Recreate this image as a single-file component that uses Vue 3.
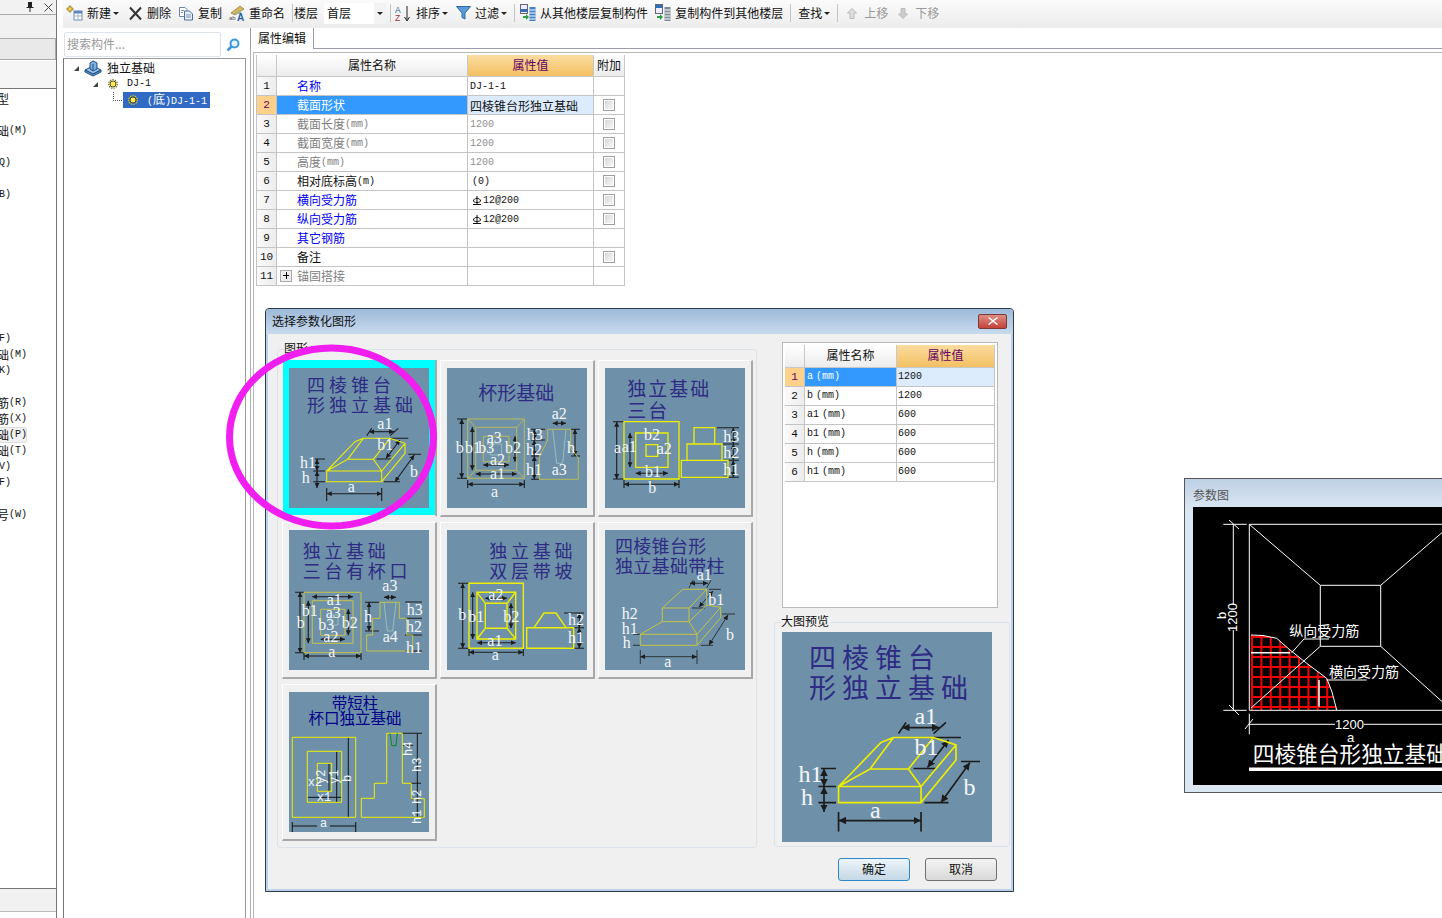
<script setup>
import { h } from 'vue'

const dockRows = [
  { i: 0, t: '型' }, { i: 2, t: '础', l: '(M)' }, { i: 4, l: 'Q)' }, { i: 6, l: 'B)' },
  { i: 15, l: 'F)' }, { i: 16, t: '础', l: '(M)' }, { i: 17, l: 'K)' }, { i: 19, t: '筋', l: '(R)' },
  { i: 20, t: '筋', l: '(X)' }, { i: 21, t: '础', l: '(P)', on: true }, { i: 22, t: '础', l: '(T)' },
  { i: 23, l: 'V)' }, { i: 24, l: 'F)' }, { i: 26, t: '号', l: '(W)' }
]
const dockList = Array.from({ length: 27 }, (_, i) => dockRows.find(r => r.i === i) || { i })

const attrs = [
  { name: '名称', cls: 'link', value: 'DJ-1-1' },
  { name: '截面形状', sel: true, cjk: true, value: '四棱锥台形独立基础', check: true },
  { name: '截面长度', unit: '(mm)', cls: 'muted', value: '1200', dim: true, check: true },
  { name: '截面宽度', unit: '(mm)', cls: 'muted', value: '1200', dim: true, check: true },
  { name: '高度', unit: '(mm)', cls: 'muted', value: '1200', dim: true, check: true },
  { name: '相对底标高', unit: '(m)', value: '(0)', pad: true, check: true },
  { name: '横向受力筋', cls: 'link', value: '12@200', rebar: true, check: true },
  { name: '纵向受力筋', cls: 'link', value: '12@200', rebar: true, check: true },
  { name: '其它钢筋', cls: 'link', value: '' },
  { name: '备注', value: '', check: true },
  { name: '锚固搭接', cls: 'muted', value: '', plus: true }
]

const params = [
  { name: 'a', value: '1200', sel: true },
  { name: 'b', value: '1200' },
  { name: 'a1', value: '600' },
  { name: 'b1', value: '600' },
  { name: 'h', value: '600' },
  { name: 'h1', value: '600' }
]

const serif = '"Liberation Serif",serif'
const mono = '"Liberation Mono",monospace'
const cjk = '"Noto Sans CJK SC",sans-serif'

const first = {
  titles: [
    { x: 18, y: 24, t: '四棱锥台', s: 18, ls: 4 },
    { x: 18, y: 44, t: '形独立基础', s: 18, ls: 4 }
  ],
  stroke: '#eeee00',
  w: 1.1,
  shape: 'M37.7 103H92.7V113.7H37.7Z M37.7 103L66 73.7L74.3 70.3H101L116 75.3V85.3L92.7 113.7 M92.7 103L116 75.3 M37.7 103L58.7 91.3H84.3L92.7 103 M58.7 91.3L74.3 70.3 M84.3 91.3L101 70.3',
  ticks: 'M37.7 120V133 M92.7 120V133 M77.7 67.7L82.7 60.3 M101 67.7L109.3 60.3 M101 70.3H119.3 M87.7 91H102.7 M119.3 86.3H132 M95 113.7H111 M26 91H36 M24.3 103H36 M24.3 113.7H36',
  dims: [[37.7, 125.7, 92.7, 125.7], [80, 63.7, 105, 63.7], [111, 72, 97, 90.3], [125.3, 87, 106, 113.7], [28, 91, 28, 103], [28, 103, 28, 120]],
  labels: [[88.3, 61, 'a1'], [88.3, 82, 'b1'], [121, 108.7, 'b'], [11, 100.3, 'h1'], [12.7, 115.3, 'h'], [58.7, 123.7, 'a']]
}

const drawings = [
  { id: 1, selected: true, ...first },
  {
    id: 2,
    titles: [{ x: 31.3, y: 32, t: '杯形基础', s: 19, ls: 0 }],
    stroke: '#b9b955',
    w: 1,
    shape: 'M20.7 51H77.3V110.3H20.7Z M28.7 59.3H69.7V102.3H28.7Z M36.3 68.3H62V93.7H36.3Z M20.7 51L28.7 59.3 M77.3 51L69.7 59.3 M20.7 110.3L28.7 102.3 M77.3 110.3L69.7 102.3 M100.7 61.3H123.7V80L131.3 90V111.3H92.3V88.7L100.7 72Z',
    inner: 'M43 76H54.7V87H43Z M105.7 61.3L109.7 95.3H115.7L119 61.3',
    ticks: 'M10 51H20 M10 110.3H20 M20.7 112V120 M77.3 112V120 M84 61.3H98 M84 72H98 M84 88H92 M84 111.3H92 M124 61.3H133 M124 88H133',
    dims: [[14.7, 51, 14.7, 110.3], [25.3, 59.3, 25.3, 102.3], [68, 68.3, 68, 93.7], [20.7, 116.3, 77.3, 116.3], [28.7, 106, 69.7, 106], [36.3, 97, 62, 97], [87.3, 61.3, 87.3, 72], [87.3, 72, 87.3, 88], [87.3, 88, 87.3, 111.3], [128, 61.3, 128, 88], [105.7, 55.3, 119, 55.3]],
    labels: [[8.7, 85, 'b'], [18, 85, 'b1'], [31.3, 85, 'b3'], [39.7, 74.7, 'a3'], [58, 85, 'b2'], [43, 97, 'a2'], [43, 111.3, 'a1'], [44, 128.7, 'a'], [79.7, 72, 'h3'], [79, 87, 'h2'], [79, 107, 'h1'], [104.7, 51.3, 'a2'], [120, 85.3, 'h'], [104.7, 107, 'a3']]
  },
  {
    id: 3,
    titles: [
      { x: 22.3, y: 28, t: '独立基础', s: 19, ls: 2 },
      { x: 22.3, y: 50, t: '三台', s: 19, ls: 2 }
    ],
    stroke: '#eeee00',
    w: 1.3,
    shape: 'M19 53.7H74V111H19Z M30.7 65H63V99.3H30.7Z M41 76.7H52.7V88.3H41Z M89 59.7H109.7V76H89Z M82 76H117V92.3H82Z M76.3 92.3H123V109.3H76.3Z',
    ticks: 'M8 53.7H19 M8 111H19 M19 112V120 M74 112V120 M112 59.7H134 M118 76H134 M118 92.3H134 M118 109.3H134',
    dims: [[11.7, 53.7, 11.7, 111], [25, 65, 25, 99.3], [19, 116.3, 74, 116.3], [30.7, 105.3, 63, 105.3], [128.3, 59.7, 128.3, 76], [128.3, 76, 128.3, 92.3], [128.3, 92.3, 128.3, 109.3]],
    labels: [[9, 85.3, 'a'], [16.7, 83.7, 'a1'], [39, 72, 'b2'], [51.7, 86, 'a2'], [40, 108.7, 'b1'], [43.3, 124.7, 'b'], [118.3, 73.7, 'h3'], [118.3, 90.3, 'h2'], [118.3, 107, 'h1']]
  },
  {
    id: 4,
    titles: [
      { x: 13.7, y: 27.7, t: '独立基础', s: 18, ls: 3.7 },
      { x: 13.7, y: 48.3, t: '三台有杯口', s: 18, ls: 3.7 }
    ],
    stroke: '#c4c445',
    w: 1,
    shape: 'M15 62.3H72V122.7H15Z M23.3 70.7H64V113.3H23.3Z M31.7 79.3H56V105.3H31.7Z M91 72.3H110.3V88.3H117.7V105H123.7V121H77.7V105H83.7V88.3H91Z',
    inner: 'M95 72.3L98.3 101H103.7L107 72.3 M41 85H49V95H41Z',
    ticks: 'M6 62.3H15 M6 122.7H15 M15 123V130 M72 123V130 M76 72.3H90 M76 101H90 M116 72H133 M116 88.3H133 M116 105H133 M116 121H133',
    dims: [[11, 62.3, 11, 122.7], [19.3, 70.7, 19.3, 113.3], [59.3, 79.3, 59.3, 105.3], [15, 126, 72, 126], [23.3, 66.7, 64, 66.7], [31.7, 109.3, 56, 109.3], [95, 67.3, 107, 67.3], [80, 72.3, 80, 101]],
    labels: [[37.7, 75, 'a1'], [12.7, 86, 'b1'], [36.7, 88.3, 'a3'], [7.7, 98.3, 'b'], [29.3, 100, 'b3'], [52.7, 98.3, 'b2'], [34.3, 111.7, 'a2'], [39.3, 127.3, 'a'], [93.3, 61, 'a3'], [75, 91.7, 'h'], [117.7, 85, 'h3'], [117, 101.7, 'h2'], [93.7, 112.3, 'a4'], [117, 122.7, 'h1']]
  },
  {
    id: 5,
    titles: [
      { x: 42.3, y: 27.7, t: '独立基础', s: 18, ls: 3.7 },
      { x: 42.3, y: 48.3, t: '双层带坡', s: 18, ls: 3.7 }
    ],
    stroke: '#eeee00',
    w: 1.4,
    shape: 'M22 53.3H76.3V118.3H22Z M30 62.3H68.7V109H30Z M38.3 73.3H60V98.3H38.3Z M30 62.3L38.3 73.3 M68.7 62.3L60 73.3 M30 109L38.3 98.3 M68.7 109L60 98.3 M79.7 97.7H126.7V118.3H79.7Z M87 97.7L97 83H109L119 97.7',
    ticks: 'M11 53.3H22 M11 118.3H22 M22 119V126 M76.3 119V126 M117 83H137 M120 97.7H137 M120 118.3H137',
    dims: [[15.7, 53.3, 15.7, 118.3], [25.7, 62.3, 25.7, 109], [64, 73.3, 64, 98.3], [22, 122.3, 76.3, 122.3], [30, 112.7, 68.7, 112.7], [38.3, 68.3, 60, 68.3], [132.3, 83, 132.3, 97.7], [132.3, 97.7, 132.3, 118.3]],
    labels: [[11.3, 90, 'b'], [21.3, 91.7, 'b1'], [41.3, 70, 'a2'], [56.3, 91.7, 'b2'], [40.3, 116, 'a1'], [44.7, 130, 'a'], [121, 95, 'h2'], [121, 113.3, 'h1']]
  },
  {
    id: 6,
    titles: [
      { x: 10, y: 22.7, t: '四棱锥台形', s: 18, ls: 0.3 },
      { x: 10, y: 43.3, t: '独立基础带柱', s: 18, ls: 0.3 }
    ],
    stroke: '#c4c445',
    w: 1,
    shape: 'M35.3 104.3H92V115.3H35.3Z M57.3 78H84V91.7H57.3Z M57.3 78L77.7 59.3H101.7L84 78 M101.7 59.3V75L84 91.7 M35.3 104.3L57.3 91.7 M92 104.3L84 91.7 M92 104.3L115.7 77.3V87.7L92 115.3 M101.7 75L115.7 77.3',
    ticks: 'M35.3 120V134 M92 120V134 M84 58L88 50 M101.7 58L106 50 M104 59.3H116 M87 78H100 M117 84H130 M96 115.3H108 M28 104.3H35 M28 115.3H35',
    thin: true,
    dims: [[35.3, 126.7, 92, 126.7], [85, 53.3, 103, 53.3], [108, 61, 94, 77], [123, 85, 104, 115]],
    labels: [[91.7, 50, 'a1'], [103.3, 75, 'b1'], [16.7, 89, 'h2'], [16.7, 104, 'h1'], [17.7, 118.3, 'h'], [121, 110, 'b'], [59.3, 137.3, 'a']]
  },
  {
    id: 7,
    titles: [
      { x: 66, y: 16.5, t: '带短柱', s: 15.5, anchor: 'middle', fill: '#00008b' },
      { x: 66, y: 32.3, t: '杯口独立基础', s: 15.5, anchor: 'middle', fill: '#00008b' }
    ],
    stroke: '#eeee00',
    w: 1,
    shape: 'M3.3 45.3H66.7V125.3H3.3Z M18.3 59.3H52.7V110.3H18.3Z M28.3 71.3H42.7V99.3H28.3Z M97.7 41.3H113.3V91.3H122.3V106.7H135.3V125.3H72.3V106.3H85.3V91.3H97.7Z',
    green: 'M101 41.3L102.7 53.7H107L108.3 41.3',
    ticks: 'M3.3 130V140 M66.7 130V140 M113 41.3H133 M113 53.3H124 M122 91.3H132 M122 106.7H132 M130 125.3H134',
    plain: [[59.3, 45.3, 59.3, 125.3], [47.7, 59.3, 47.7, 110.3], [40, 71.3, 40, 99.3], [18.3, 105.3, 52.7, 105.3], [3.3, 134, 28, 134], [41, 134, 66.7, 134], [128.3, 41.3, 128.3, 125.3]],
    labelFont: mono,
    labelSize: 12,
    labels: [[18.7, 94, 'x2'], [27.7, 108.7, 'x1'], [31, 135.3, 'a'], [36, 92, 'y2', -90], [49, 92, 'y1', -90], [62, 90, 'b', -90], [123, 64, 'h4', -90], [132, 80, 'h3', -90], [132, 112, 'h2', -90], [132, 132, 'h1', -90]]
  }
]

const preview = first

// one drawing, shared by the tile and the larger preview
const Drawing = (props) => {
  const d = props.d
  const dark = d.thin ? 0.8 : 1.1
  const kids = [h('rect', { width: 140, height: 140, fill: '#6e91a9' })]
  d.titles.forEach(t => {
    kids.push(h('text', {
      x: t.x, y: t.y, 'font-size': t.s, 'font-family': cjk, 'letter-spacing': t.ls || 0,
      'text-anchor': t.anchor || 'start', fill: t.fill || '#2e2b84'
    }, t.t))
  })
  kids.push(h('path', { d: d.ticks, fill: 'none', stroke: '#1c1c1c', 'stroke-width': dark }))
  ;(d.dims || []).forEach(l => {
    kids.push(h('line', {
      x1: l[0], y1: l[1], x2: l[2], y2: l[3], stroke: '#1c1c1c', 'stroke-width': dark,
      'marker-start': 'url(#arrow)', 'marker-end': 'url(#arrow)'
    }))
  })
  ;(d.plain || []).forEach(l => {
    kids.push(h('line', { x1: l[0], y1: l[1], x2: l[2], y2: l[3], stroke: '#111', 'stroke-width': 1 }))
  })
  kids.push(h('path', { d: d.shape, fill: 'none', stroke: d.stroke, 'stroke-width': d.w }))
  if (d.inner) kids.push(h('path', { d: d.inner, fill: 'none', stroke: '#9cc4bc', 'stroke-width': 0.9 }))
  if (d.green) kids.push(h('path', { d: d.green, fill: 'none', stroke: '#0a8a1a', 'stroke-width': 1 }))
  d.labels.forEach(l => {
    kids.push(h('text', {
      x: l[0], y: l[1], fill: '#f4f6f8', 'font-size': d.labelSize || 16, 'font-family': d.labelFont || serif,
      transform: l[3] ? `rotate(${l[3]} ${l[0]} ${l[1]})` : undefined
    }, l[2]))
  })
  return h('svg', { viewBox: '0 0 140 140', width: props.size, height: props.size, style: 'display:block' }, kids)
}
Drawing.props = ['d', 'size']

const meshX = Array.from({ length: 10 }, (_, i) => 59 + i * 9.4)
const meshY = Array.from({ length: 8 }, (_, i) => 130 + i * 10)
</script>

<template>
  <div class="app">
    <svg class="svg-defs" aria-hidden="true">
      <defs>
        <marker id="arrow" markerUnits="userSpaceOnUse" markerWidth="5" markerHeight="5" refX="5" refY="2.5" orient="auto-start-reverse">
          <path d="M0 0L5 2.5L0 5Z" fill="#1c1c1c" />
        </marker>
      </defs>
    </svg>

    <aside class="dock">
      <div class="dock-title">
        <svg width="8" height="10" viewBox="0 0 8 10"><path d="M2 0H6V5H7.500V6H4.500V10H3.500V6H.5V5H2Z" fill="#222" /></svg>
        <svg width="9" height="9" viewBox="0 0 9 9"><path d="M.5.5L8.500 8.500M8.500.5L.5 8.500" stroke="#444" fill="none" /></svg>
      </div>
      <div class="dock-band"></div>
      <div class="dock-btn"></div>
      <div class="dock-band low"></div>
      <ul class="dock-list">
        <li v-for="r in dockList" :key="r.i" :class="{ on: r.on }">
          <span v-if="r.t" class="cut">{{ r.t }}</span><span v-if="r.l" class="latin" :class="{ lone: !r.t }">{{ r.l }}</span>
        </li>
      </ul>
      <div class="dock-foot"></div>
    </aside>

    <div class="work">
      <div class="toolbar">
        <div class="tool new">
          <svg width="17" height="16" viewBox="0 0 17 16"><path d="M3 1H5V3H7V5H5V7H3V5H1V3H3Z" fill="#f2d34e" stroke="#8a7420" stroke-width=".7" /><rect x="8" y="6" width="8" height="9" fill="#fff" stroke="#6d8bb5" /><rect x="8" y="6" width="8" height="2.500" fill="#5a86c4" /><path d="M8 11H16M12 8V15" stroke="#9db3cf" /></svg>
          <span>新建</span><i class="caret"></i>
        </div>
        <div class="tool">
          <svg width="15" height="15" viewBox="0 0 15 15"><path d="M2 1.500L13 13.500M13 1.500L2 13.500" stroke="#333" stroke-width="2" fill="none" /></svg>
          <span>删除</span>
        </div>
        <div class="tool">
          <svg width="16" height="15" viewBox="0 0 16 15"><path d="M1.500 1.500H7L9 3.500V10.500H1.500Z" fill="#fff" stroke="#6f85a8" /><path d="M6.500 5H11.500L14.500 8V14H6.500Z" fill="#e6eefa" stroke="#4f6f9f" /><path d="M8 9H13M8 11H13M3 4.500H6M3 6.500H5" stroke="#7f95b8" /></svg>
          <span>复制</span>
        </div>
        <div class="tool">
          <svg width="16" height="17" viewBox="0 0 16 17"><path d="M2 8L11 1L15 4L6 10Z" fill="#d9b55a" stroke="#8b7a3a" stroke-width=".7" /><path d="M4 9L12 5V9H5Z" fill="#9fb58a" /><text x="0" y="15" font-size="6" font-family="Liberation Sans" fill="#555">ab</text><text x="8" y="16" font-size="10" font-weight="700" font-family="Liberation Sans" fill="#2b5fa8">A</text></svg>
          <span>重命名</span>
        </div>
        <i class="sep"></i>
        <span class="tool floor-label">楼层</span>
        <div class="combo"><span>首层</span><b><i class="caret"></i></b></div>
        <i class="sep close"></i>
        <div class="tool">
          <svg width="17" height="17" viewBox="0 0 17 17"><text x="0" y="7.500" font-size="8.500" font-family="Liberation Sans" fill="#2c5ea8">A</text><text x="0" y="16" font-size="8.500" font-family="Liberation Sans" fill="#a83232">Z</text><path d="M12 1V15M9.500 12L12 16L14.500 12" stroke="#222" fill="none" /></svg>
          <span>排序</span><i class="caret"></i>
        </div>
        <div class="tool filter">
          <svg width="15" height="14" viewBox="0 0 15 14"><path d="M.5.5H14.500L9 7V13L6 11.500V7Z" fill="#5a9ad6" stroke="#2c6aa5" /></svg>
          <span>过滤</span><i class="caret"></i>
        </div>
        <i class="sep tight"></i>
        <div class="tool">
          <svg width="16" height="18" viewBox="0 0 16 18"><rect x=".5" y=".5" width="7" height="9" fill="#eef" stroke="#667" /><rect x="1" y="5" width="6" height="3" fill="#2f6fc0" /><path d="M3 12H6V10L9 13L6 16V14H3Z" fill="#2ea043" /><path d="M9.500 3H15.500V17H9.500Z" fill="#3f7fc8" /><path d="M9.500 6H15.500M9.500 9H15.500M9.500 12H15.500M9.500 15H15.500" stroke="#fff" /></svg>
          <span>从其他楼层复制构件</span>
        </div>
        <div class="tool">
          <svg width="16" height="18" viewBox="0 0 16 18"><rect x=".5" y=".5" width="7" height="9" fill="#eef" stroke="#667" /><rect x="1" y="1" width="6" height="3" fill="#2f6fc0" /><path d="M2 12H5V10L8 13L5 16V14H2Z" fill="#2ea043" /><path d="M9.500 3H15.500V17H9.500Z" fill="#7e8a97" /><path d="M9.500 6H15.500M9.500 9H15.500M9.500 12H15.500M9.500 15H15.500" stroke="#fff" /></svg>
          <span>复制构件到其他楼层</span>
        </div>
        <i class="sep"></i>
        <div class="tool">
          <span>查找</span><i class="caret"></i>
        </div>
        <i class="sep"></i>
        <div class="tool off up">
          <svg width="10" height="11" viewBox="0 0 10 11"><path d="M5 .5L9.500 5H7V10.500H3V5H.5Z" fill="#ddd" stroke="#bbb" /></svg>
          <span>上移</span>
        </div>
        <div class="tool off down">
          <svg width="10" height="11" viewBox="0 0 10 11"><path d="M5 10.500L9.500 6H7V.5H3V6H.5Z" fill="#ccc" stroke="#bbb" /></svg>
          <span>下移</span>
        </div>
      </div>

      <div class="work-body">
        <div class="tree-panel">
          <div class="search">
            <span class="search-box">搜索构件...</span>
            <svg width="14" height="14" viewBox="0 0 14 14"><circle cx="8.500" cy="5.500" r="4" fill="#e4f2fc" stroke="#3d9ad9" stroke-width="2" /><path d="M5.500 8.500L1.500 12.500" stroke="#3d9ad9" stroke-width="2.500" /></svg>
          </div>
          <div class="tree">
            <div class="node lvl0">
              <i class="twist"></i>
              <svg width="18" height="17" viewBox="0 0 18 17"><path d="M1 10L9 6L17 10L9 14Z" fill="#9cc3e6" stroke="#1f4f86" /><path d="M1 10V12L9 16L17 12V10L9 14Z" fill="#5f93c8" stroke="#1f4f86" /><path d="M6 3L9 1L13 3V9L9 11L6 9Z" fill="#7fb0de" stroke="#1f4f86" /><path d="M9 4V11" stroke="#1f4f86" /></svg>
              <span>独立基础</span>
            </div>
            <div class="node lvl1">
              <i class="twist"></i>
              <svg width="10" height="10" viewBox="0 0 10 10"><circle cx="5" cy="5" r="3" fill="#ffe94d" stroke="#222" stroke-width=".8" /><circle cx="5" cy="5" r="4.300" fill="none" stroke="#6b6000" stroke-width="1.200" stroke-dasharray="1.300 1.100" /></svg>
              <span class="latin">DJ-1</span>
            </div>
            <div class="node lvl2">
              <i class="branch"></i>
              <div class="node-sel">
                <svg width="10" height="10" viewBox="0 0 10 10"><circle cx="5" cy="5" r="3" fill="#ffe94d" stroke="#222" stroke-width=".8" /><circle cx="5" cy="5" r="4.300" fill="none" stroke="#e8d800" stroke-width="1.200" stroke-dasharray="1.300 1.100" /></svg>
                <span class="sel-text"><em>(</em>底<em>)DJ-1-1</em></span>
              </div>
            </div>
          </div>
        </div>
        <div class="splitter"></div>
        <div class="editor">
          <div class="tabs"><span class="tab">属性编辑</span></div>
          <div class="pane-wrap">
            <div class="pane">
              <div class="sheet">
                <div class="hd"></div>
                <div class="hd">属性名称</div>
                <div class="hd hot">属性值</div>
                <div class="hd">附加</div>
                <template v-for="(row, i) in attrs" :key="i">
                  <div class="num" :class="{ sel: row.sel }">{{ i + 1 }}</div>
                  <div class="name" :class="[row.cls, { sel: row.sel }]">
                    <span v-if="row.plus" class="plus"></span>{{ row.name }}<span v-if="row.unit" class="latin">{{ row.unit }}</span>
                  </div>
                  <div class="val" :class="{ sel: row.sel, cjk: row.cjk, dim: row.dim, pad: row.pad }">
                    <svg v-if="row.rebar" class="rebar" width="10" height="10" viewBox="0 0 10 10"><path d="M1.500 6C1.500 2.500 8.500 2.500 8.500 6C8.500 8 1.500 8 1.500 6ZM5 1V9M1 9.500H9" fill="none" stroke="#111" /></svg>{{ row.value }}
                  </div>
                  <div class="chk"><i v-if="row.check" class="box"></i></div>
                </template>
              </div>
            </div>
          </div>
        </div>
      </div>
    </div>

    <section class="dialog">
      <header class="dlg-title">
        <span>选择参数化图形</span>
        <button class="dlg-close">
          <svg width="10" height="8" viewBox="0 0 10 8"><path d="M1 0L5 3L9 0L10 1L6 4L10 7L9 8L5 5L1 8L0 7L4 4L0 1Z" fill="#fff" /></svg>
        </button>
      </header>
      <div class="dlg-body">
        <fieldset class="group shapes">
          <span class="group-label">图形</span>
          <div class="tiles">
            <div v-for="d in drawings" :key="d.id" class="tile" :class="{ picked: d.selected }">
              <Drawing :d="d" :size="140" />
            </div>
          </div>
        </fieldset>
        <div class="side">
          <div class="param-box">
            <div class="param-sheet">
              <div class="hd"></div>
              <div class="hd">属性名称</div>
              <div class="hd hot">属性值</div>
              <template v-for="(p, i) in params" :key="p.name">
                <div class="num" :class="{ sel: p.sel }">{{ i + 1 }}</div>
                <div class="p-name latin" :class="{ sel: p.sel }">{{ p.name }}<small>(mm)</small></div>
                <div class="p-val" :class="{ sel: p.sel }">{{ p.value }}</div>
              </template>
            </div>
          </div>
          <fieldset class="group big">
            <span class="group-label">大图预览</span>
            <Drawing :d="preview" :size="210" />
          </fieldset>
          <div class="actions">
            <button class="btn primary">确定</button>
            <button class="btn">取消</button>
          </div>
        </div>
      </div>
    </section>

    <section class="figure">
      <div class="figure-title">参数图</div>
      <svg class="figure-view" width="300" height="278" viewBox="0 0 300 278">
        <defs>
          <clipPath id="mesh-area"><path d="M58 128L70 128.500L83.700 131.300L97 143L113.700 156.300L133.700 171.300L139 185L143.700 203H58Z" /></clipPath>
        </defs>
        <rect width="300" height="278" fill="#000" />
        <g clip-path="url(#mesh-area)" stroke="#f00000" stroke-width="2">
          <line v-for="x in meshX" :key="'x' + x" :x1="x" :x2="x" y1="125" y2="203" />
          <line v-for="y in meshY" :key="'y' + y" x1="58" x2="146" :y1="y" :y2="y" />
        </g>
        <g fill="none" stroke="#fff" stroke-width="1">
          <path d="M56.300 17.300H258.700V203.300H56.300Z" />
          <path d="M127.300 78.300H187.700V139.300H127.300Z" />
          <path d="M56.300 17.300L127.300 78.300M258.700 17.300L187.700 78.300M187.700 139.300L258.700 203.300M58 201L127.300 139.300" />
          <path d="M58 128L70 128.500L83.700 131.300L97 143L113.700 156.300L133.700 171.300L139 185L143.700 203" />
          <path d="M58 145.700H97M126 173V199.700" stroke-width="1.500" />
          <path d="M40.300 17.300V98M40.300 123V203.300M30.300 17.300H53.700M30.300 203.300H53.700M36 13L46 22M36 198L46 208" />
          <path d="M56.300 206.700V227.300M56.300 217.300H142M171 217.300H258M52 222L60 212" />
          <path d="M98.700 145.700L111 132H136M133.700 173H173.700" />
        </g>
        <text class="fig-num" x="0" y="0" transform="translate(44 125) rotate(-90)">1200</text>
        <text class="fig-num" x="0" y="0" transform="translate(33 112) rotate(-90)">b</text>
        <text class="fig-num" x="142" y="222">1200</text>
        <text class="fig-num" x="154" y="235">a</text>
        <text class="fig-note" x="96.300" y="128.700">纵向受力筋</text>
        <text class="fig-note" x="136" y="169.700">横向受力筋</text>
        <text class="fig-title" x="59.700" y="255">四棱锥台形独立基础</text>
        <rect x="56" y="260.500" width="240" height="3.500" fill="#fff" />
      </svg>
    </section>

    <svg class="circle-mark" width="222" height="196" viewBox="0 0 222 196">
      <ellipse cx="110.500" cy="97" rx="102" ry="89" fill="none" stroke="#f01ff0" stroke-width="7" />
    </svg>
  </div>
</template>

<style>
html, body {
  margin: 0;
  overflow: hidden;
  background: #fff;
}
</style>

<style scoped>
.app {
  position: relative;
  display: flex;
  width: 1442px;
  height: 918px;
  overflow: hidden;
  background: #fff;
  color: #111;
  font: 12px/1 "Noto Sans CJK SC", sans-serif;
}

.svg-defs {
  position: absolute;
  width: 0;
  height: 0;
}

.latin {
  font-family: "Liberation Mono", monospace;
  font-size: 10px;
}

/* left dock */
.dock {
  display: flex;
  flex-direction: column;
  flex: none;
  box-sizing: border-box;
  width: 57px;
  height: 918px;
  border-right: 1px solid #777;
}

.dock-title {
  display: flex;
  align-items: center;
  justify-content: flex-end;
  gap: 10px;
  box-sizing: border-box;
  height: 15px;
  padding-right: 3px;
  background: #f2f2f2;
  border-bottom: 1px solid #aaa;
}

.dock-band {
  height: 23px;
  background: #f1f1f1;
}

.dock-band.low {
  height: 27px;
  margin-top: 1px;
  background: #f5f5f5;
  border-bottom: 1px solid #777;
}

.dock-btn {
  box-sizing: border-box;
  height: 22px;
  background: #e9e9e9;
  border: 1px solid #aaa;
  border-left: 0;
}

.dock-list {
  flex: 1;
  margin: 0;
  padding: 2px 0 0;
  overflow: hidden;
  list-style: none;
}

.dock-list li {
  display: flex;
  align-items: center;
  box-sizing: border-box;
  height: 16px;
  white-space: nowrap;
}

.dock-list li.on {
  width: 27px;
  margin: 0;
  background: #f1f1f1;
  border: 1px solid #ddd;
  border-left: 0;
  border-radius: 0 3px 3px 0;
}

.cut {
  margin-left: -3px;
}

.lone {
  margin-left: -1px;
}

.dock-foot {
  height: 22px;
  margin-bottom: 6px;
  background: #f1f1f1;
  border-top: 1px solid #777;
  border-bottom: 1px solid #bbb;
}

/* toolbar */
.work {
  display: flex;
  flex-direction: column;
  flex: 1;
  min-width: 0;
  margin-left: 6px;
}

.toolbar {
  display: flex;
  align-items: center;
  gap: 7px;
  flex: none;
  box-sizing: border-box;
  height: 28px;
  padding: 0 0 2px 3px;
  background: linear-gradient(#fbfbfb, #ececec);
  white-space: nowrap;
}

.tool {
  display: inline-flex;
  align-items: center;
  gap: 4px;
}

.tool svg {
  flex: none;
}

.tool.new {
  margin-right: 2px;
}

.tool.off {
  color: #999;
}

.tool.up {
  gap: 7px;
  margin-left: 2px;
}

.tool.down {
  gap: 7px;
  margin-left: 3px;
}

.tool.filter {
  margin-left: 1px;
}

.caret {
  width: 0;
  height: 0;
  margin-left: -2px;
  border: 3px solid transparent;
  border-top-color: #222;
  border-bottom-width: 0;
}

.sep {
  width: 1px;
  height: 18px;
  background: #c4c4c4;
}

.sep.close {
  margin-left: -3px;
  margin-right: -3px;
}

.sep.tight {
  margin-right: -2px;
}

.floor-label {
  margin-left: -6px;
}

.combo {
  display: flex;
  align-items: center;
  justify-content: space-between;
  box-sizing: border-box;
  width: 62px;
  height: 21px;
  margin-left: -1px;
  padding-left: 3px;
  background: #fff;
}

.combo b {
  display: flex;
  align-items: center;
  justify-content: center;
  width: 12px;
  height: 21px;
  background: #f3f3f3;
}

.combo .caret {
  margin-left: 0;
}

/* tree */
.work-body {
  display: flex;
  flex: 1;
  min-height: 0;
}

.tree-panel {
  display: flex;
  flex-direction: column;
  flex: none;
  box-sizing: border-box;
  width: 183px;
}

.search {
  display: flex;
  align-items: center;
  gap: 5px;
  box-sizing: border-box;
  height: 30px;
  padding: 4px 0 1px 1px;
}

.search-box {
  display: flex;
  align-items: center;
  box-sizing: border-box;
  width: 157px;
  height: 25px;
  padding: 0 0 2px 2px;
  border: 1px solid #dde3ea;
  border-radius: 2px;
  color: #999;
}

.tree {
  flex: 1;
  padding-top: 1px;
  border: 1px solid #9a9a9a;
  border-bottom: 0;
  border-left-color: #777;
}

.node {
  display: flex;
  align-items: center;
  height: 16px;
}

.lvl0 {
  padding-left: 10px;
  gap: 5px;
}

.lvl1 {
  padding-left: 29px;
  gap: 10px;
}

.lvl1 .latin {
  margin-left: -1px;
}

.lvl2 {
  padding-left: 49px;
}

.twist {
  width: 0;
  height: 0;
  border-style: solid;
  border-width: 0 0 5px 5px;
  border-color: transparent transparent #444 transparent;
}

.branch {
  width: 8px;
  height: 8px;
  margin-top: -8px;
  border-left: 1px dotted #555;
  border-bottom: 1px dotted #555;
}

.node-sel {
  display: flex;
  align-items: center;
  box-sizing: border-box;
  width: 87px;
  height: 16px;
  margin-left: 1px;
  padding-left: 5px;
  gap: 9px;
  background: #316ac5;
  color: #fff;
}

.sel-text em {
  font: 10px "Liberation Mono", monospace;
}

.splitter {
  flex: none;
  width: 4px;
}

/* property sheet */
.editor {
  display: flex;
  flex-direction: column;
  flex: 1;
  min-width: 0;
}

.tabs {
  flex: none;
  height: 21px;
  box-sizing: border-box;
  border-bottom: 1px solid #9c9caa;
}

.tab {
  display: flex;
  align-items: center;
  box-sizing: border-box;
  width: 64px;
  height: 21px;
  padding: 0 0 2px 7px;
  background: #fff;
  border: 1px solid #9c9caa;
  border-bottom: 0;
  border-top: 0;
}

.pane-wrap {
  flex: 1;
  min-height: 0;
  padding: 3px 0 0 2px;
  border-left: 1px solid #b0b0b0;
}

.pane {
  height: 100%;
  box-sizing: border-box;
  padding: 2px 0 0 2px;
  border-top: 1px solid #b8b8b8;
  border-left: 1px solid #b8b8b8;
}

.sheet {
  display: inline-grid;
  grid-template-columns: 20px 191px 126px 31px;
  grid-template-rows: 22px;
  grid-auto-rows: 19px;
  border-left: 1px solid #c4c4c4;
}

.hd {
  display: flex;
  align-items: center;
  justify-content: center;
  padding-bottom: 2px;
  background: linear-gradient(#ffffff, #ececec);
  border-right: 1px solid #c8c8c8;
  border-bottom: 1px solid #c8c8c8;
}

.hd.hot {
  background: linear-gradient(#fbdc9f, #f2c063);
  color: #660066;
}

.num {
  display: flex;
  align-items: center;
  justify-content: center;
  background: linear-gradient(90deg, #fafafa, #ececec);
  border-right: 1px solid #c4c4c4;
  border-bottom: 1px solid #c4c4c4;
  font: 11px "Liberation Mono", monospace;
}

.num.sel {
  background: #fdd08c;
  color: #660066;
}

.name {
  display: flex;
  align-items: center;
  padding-left: 20px;
  border-right: 1px solid #c4c4c4;
  border-bottom: 1px solid #c4c4c4;
  white-space: nowrap;
}

.name .latin {
  margin-top: 2px;
}

.name.link {
  color: #0000f0;
}

.name.muted {
  color: #808080;
}

.name.sel {
  background: #3399ff;
  color: #fff;
}

.plus {
  position: relative;
  box-sizing: border-box;
  width: 12px;
  height: 12px;
  margin: 0 5px 0 -17px;
  background: #eee;
  border: 1px solid #aaa;
}

.plus::before,
.plus::after {
  content: "";
  position: absolute;
  background: #000;
}

.plus::before {
  left: 2px;
  top: 4px;
  width: 6px;
  height: 1px;
}

.plus::after {
  left: 5px;
  top: 1px;
  width: 1px;
  height: 7px;
}

.val {
  display: flex;
  align-items: center;
  padding-left: 2px;
  border-right: 1px solid #c4c4c4;
  border-bottom: 1px solid #c4c4c4;
  font: 10px "Liberation Mono", monospace;
  white-space: nowrap;
}

.val.cjk {
  font: 12px "Noto Sans CJK SC", sans-serif;
}

.val.sel {
  background: #dcecfd;
}

.val.dim {
  color: #909090;
}

.val.pad {
  padding-left: 4px;
}

.rebar {
  margin: 0 1px 0 2px;
}

.chk {
  display: flex;
  align-items: center;
  justify-content: center;
  border-right: 1px solid #c4c4c4;
  border-bottom: 1px solid #c4c4c4;
}

.box {
  box-sizing: border-box;
  width: 12px;
  height: 12px;
  background: linear-gradient(135deg, #d4d4d4, #fafafa);
  border: 1px solid #a0a0a0;
  box-shadow: inset 0 0 0 1px #fff;
}

/* dialog */
.dialog {
  position: absolute;
  left: 265px;
  top: 308px;
  display: flex;
  flex-direction: column;
  box-sizing: border-box;
  width: 749px;
  height: 584px;
  background: #b9d1ea;
  border: 1px solid #2f3b46;
  border-radius: 4px 4px 0 0;
}

.dlg-title {
  display: flex;
  align-items: center;
  justify-content: space-between;
  flex: none;
  box-sizing: border-box;
  height: 25px;
  padding: 0 6px 2px 6px;
  background: linear-gradient(#9dbad9, #c8daee);
  border-radius: 3px 3px 0 0;
}

.dlg-close {
  display: flex;
  align-items: center;
  justify-content: center;
  box-sizing: border-box;
  width: 29px;
  height: 15px;
  margin-top: 1px;
  padding: 0;
  background: linear-gradient(#dd8d82, #c4443a);
  border: 1px solid #7b3a36;
  border-radius: 2px;
}

.dlg-body {
  display: flex;
  flex: 1;
  min-height: 0;
  margin: 0 2px 2px;
  padding: 8px 2px 0 9px;
  background: #f0f0f0;
}

.group {
  position: relative;
  box-sizing: border-box;
  margin: 0;
  min-width: 0;
  border: 1px solid #dde3ea;
  border-radius: 3px;
}

.group-label {
  position: absolute;
  left: 6px;
  top: -8px;
  padding-right: 1px;
  background: #f0f0f0;
}

.shapes {
  flex: none;
  width: 480px;
  height: 499px;
  margin-top: 7px;
  padding: 10px 0 0 4px;
}

.tiles {
  display: grid;
  grid-template-columns: repeat(3, 155px);
  grid-auto-rows: 157px;
  gap: 5px 3px;
}

.tile {
  box-sizing: border-box;
  padding: 7px 0 0 6px;
  background: #f0f0f0;
  border-top: 1px solid #fff;
  border-left: 1px solid #fff;
  border-right: 2px solid #a8a8a8;
  border-bottom: 2px solid #a8a8a8;
}

.tile.picked {
  background: #00ffff;
  border-top-color: #00ffff;
  border-left-color: #f0f0f0;
  border-bottom-color: #f0f0f0;
}

.side {
  display: flex;
  flex-direction: column;
  flex: none;
  width: 236px;
  margin-left: 17px;
}

.param-box {
  box-sizing: border-box;
  width: 216px;
  height: 266px;
  margin-left: 8px;
  padding: 2px 1px 1px 2px;
  background: #fff;
  border: 1px solid #b8b8b8;
}

.param-sheet {
  display: grid;
  grid-template-columns: 20px 92px 98px;
  grid-template-rows: 23px;
  grid-auto-rows: 19px;
}

.p-name,
.p-val {
  display: flex;
  align-items: center;
  padding: 0 0 2px 2px;
  border-right: 1px solid #c4c4c4;
  border-bottom: 1px solid #c4c4c4;
  font: 10px "Liberation Mono", monospace;
}

.p-val {
  padding-left: 1px;
}

.p-name small {
  margin-left: 3px;
  font-size: 10px;
}

.p-name.sel {
  background: #3399ff;
  color: #fff;
}

.p-val.sel {
  background: #dcecfd;
}

.big {
  flex: none;
  width: 236px;
  height: 225px;
  margin-top: 14px;
  padding: 9px 0 0 7px;
}

.actions {
  display: flex;
  justify-content: flex-end;
  gap: 15px;
  margin-top: 11px;
  padding-right: 13px;
}

.btn {
  box-sizing: border-box;
  width: 72px;
  height: 23px;
  padding: 0 0 2px;
  background: linear-gradient(#f4f4f4, #d8d8d8);
  border: 1px solid #707070;
  border-radius: 3px;
  color: #111;
  font: 12px "Noto Sans CJK SC", sans-serif;
}

.btn.primary {
  background: linear-gradient(#eef5fa, #c4d8e6);
  border-color: #2c8ac9;
}

/* floating parameter picture */
.figure {
  position: absolute;
  left: 1184px;
  top: 478px;
  box-sizing: border-box;
  width: 320px;
  height: 315px;
  padding: 0 0 0 8px;
  background: linear-gradient(#bdd0e4, #dbe6f3 30px, #dbe6f3);
  border: 1px solid #555;
}

.figure-title {
  display: flex;
  align-items: center;
  box-sizing: border-box;
  height: 28px;
  padding-top: 4px;
  color: #555;
}

.figure-view {
  display: block;
}

.fig-num {
  fill: #fff;
  font: 13px "Liberation Sans", sans-serif;
}

.fig-note {
  fill: #fff;
  font: 14px "Noto Sans CJK SC", sans-serif;
}

.fig-title {
  fill: #fff;
  font: 21.700px "Noto Sans CJK SC", sans-serif;
}

.circle-mark {
  position: absolute;
  left: 221px;
  top: 340px;
  pointer-events: none;
}
</style>
